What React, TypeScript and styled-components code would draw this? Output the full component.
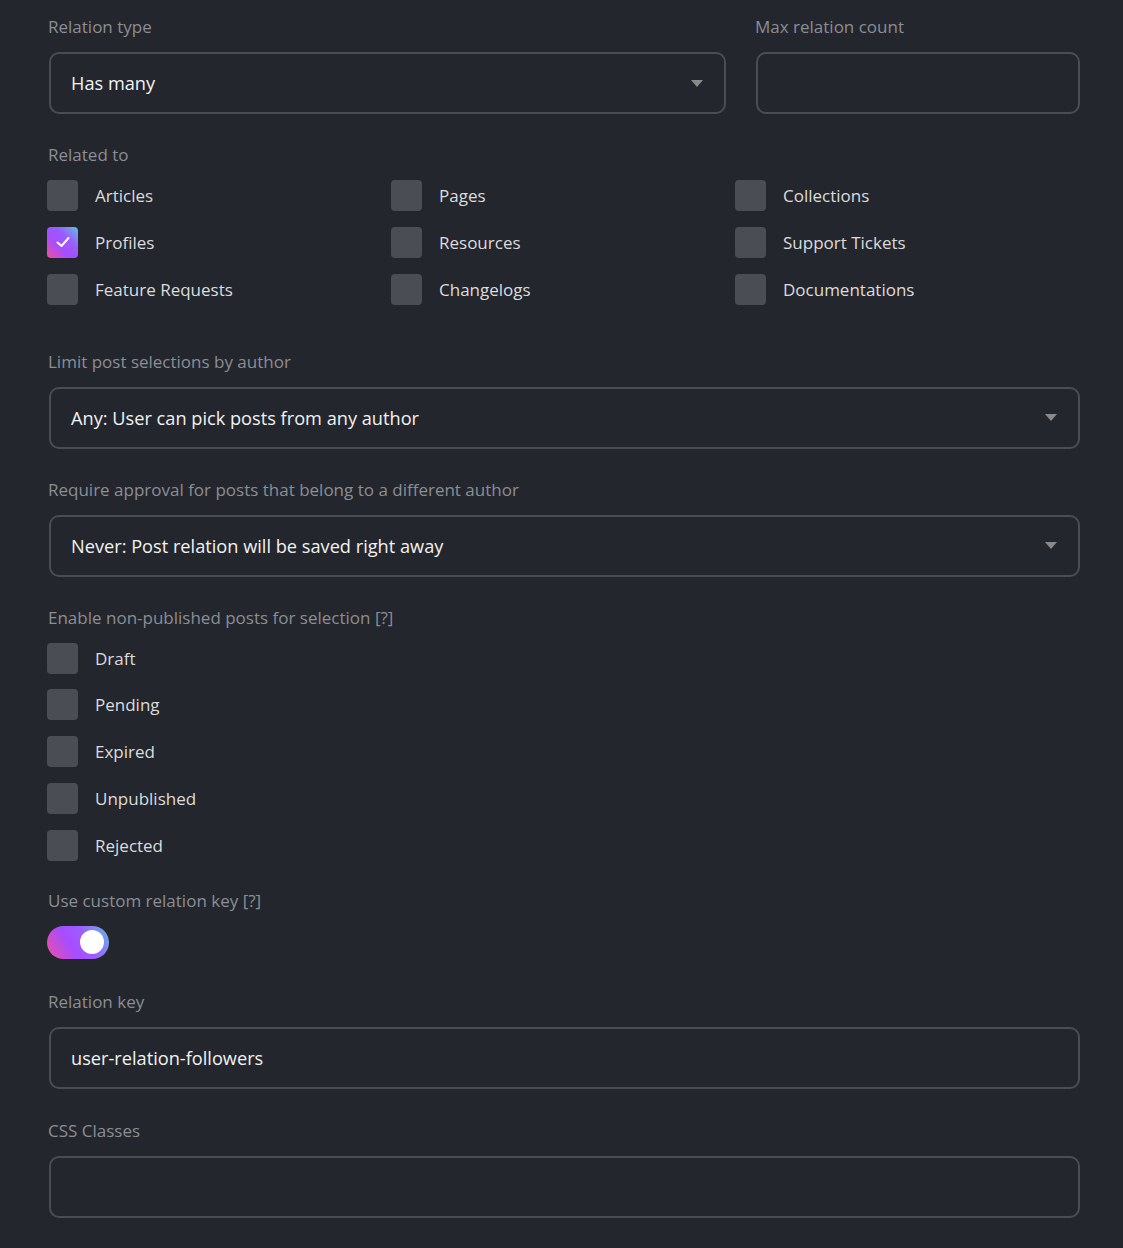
import React from "react";
import styled, { createGlobalStyle } from "styled-components";

const Global = createGlobalStyle`
  html, body { margin: 0; padding: 0; background: #23262d; }
  body { font-family: "Open Sans", "Noto Sans", sans-serif; }
  * { box-sizing: border-box; }
`;

const Page = styled.div`
  background: #23262d;
  min-height: 1248px;
  padding: 15px 43px 30px 48px;
  display: flex;
  flex-direction: column;
`;

const Row = styled.div`
  display: grid;
  grid-template-columns: 678px 1fr;
  column-gap: 29px;
`;

const Field = styled.div<{ $mb?: number }>`
  display: flex;
  flex-direction: column;
  margin-bottom: ${(p) => (p.$mb ?? 29)}px;
`;

const Label = styled.div`
  font-size: 17px;
  line-height: 24px;
  height: 24px;
  color: #8b8e94;
  margin-bottom: 13px;
  white-space: nowrap;
`;

const Box = styled.div`
  height: 62px;
  border: 2px solid #4a4d53;
  border-radius: 10px;
  margin-left: 1px;
  display: flex;
  align-items: center;
  padding: 0 21px 0 20px;
  color: #f2f2f2;
  font-size: 18.2px;
`;

const Value = styled.span`
  flex: 1;
`;

const Caret = styled.span`
  width: 0;
  height: 0;
  border-left: 6px solid transparent;
  border-right: 6px solid transparent;
  border-top: 7px solid #8a8a8a;
`;

const CheckGrid = styled.div<{ $cols: number }>`
  display: grid;
  grid-template-columns: repeat(${(p) => p.$cols}, 344px);
  row-gap: 15.75px;
`;

const CheckItem = styled.label`
  display: flex;
  align-items: center;
  gap: 17px;
  height: 31px;
  color: #dcdcdc;
  font-size: 17px;
  white-space: nowrap;
`;

const CheckBox = styled.span<{ $on?: boolean }>`
  width: 31px;
  height: 31px;
  border-radius: 4px;
  margin-left: -1px;
  background: ${(p) =>
    p.$on
      ? "linear-gradient(45deg, #f24f9a 0%, #a64dff 38%, #9b5cff 65%, #5ec3e0 100%)"
      : "#4a4d54"};
  display: flex;
  align-items: center;
  justify-content: center;
  flex-shrink: 0;
`;

const Toggle = styled.div`
  width: 62px;
  height: 33px;
  border-radius: 17px;
  margin-left: -1px;
  background: linear-gradient(60deg, #f04fa0 0%, #a64dff 38%, #9e5cff 62%, #63b8e3 100%);
  display: flex;
  align-items: center;
  justify-content: flex-end;
  padding-right: 5px;
`;

const Knob = styled.span`
  width: 24px;
  height: 24px;
  border-radius: 50%;
  background: #ffffff;
`;

const Check = () => (
  <svg width="16" height="16" viewBox="0 0 16 16">
    <path d="M2.5 8.5 L6.5 12 L13.5 4" fill="none" stroke="#fff" strokeWidth="2" strokeLinecap="round" strokeLinejoin="round" />
  </svg>
);

const related = [
  ["Articles", false],
  ["Pages", false],
  ["Collections", false],
  ["Profiles", true],
  ["Resources", false],
  ["Support Tickets", false],
  ["Feature Requests", false],
  ["Changelogs", false],
  ["Documentations", false],
] as const;

const statuses = ["Draft", "Pending", "Expired", "Unpublished", "Rejected"];

export default function App() {
  return (
    <>
      <Global />
      <Page>
        <Row>
          <Field>
            <Label>Relation type</Label>
            <Box>
              <Value>Has many</Value>
              <Caret />
            </Box>
          </Field>
          <Field>
            <Label>Max relation count</Label>
            <Box />
          </Field>
        </Row>

        <Field $mb={45}>
          <Label>Related to</Label>
          <CheckGrid $cols={3}>
            {related.map(([name, on]) => (
              <CheckItem key={name}>
                <CheckBox $on={on}>{on && <Check />}</CheckBox>
                {name}
              </CheckItem>
            ))}
          </CheckGrid>
        </Field>

        <Field>
          <Label>Limit post selections by author</Label>
          <Box>
            <Value>Any: User can pick posts from any author</Value>
            <Caret />
          </Box>
        </Field>

        <Field>
          <Label>Require approval for posts that belong to a different author</Label>
          <Box>
            <Value>Never: Post relation will be saved right away</Value>
            <Caret />
          </Box>
        </Field>

        <Field $mb={28}>
          <Label>Enable non-published posts for selection [?]</Label>
          <CheckGrid $cols={1}>
            {statuses.map((s) => (
              <CheckItem key={s}>
                <CheckBox />
                {s}
              </CheckItem>
            ))}
          </CheckGrid>
        </Field>

        <Field $mb={31}>
          <Label>Use custom relation key [?]</Label>
          <Toggle>
            <Knob />
          </Toggle>
        </Field>

        <Field $mb={30}>
          <Label>Relation key</Label>
          <Box>
            <Value>user-relation-followers</Value>
          </Box>
        </Field>

        <Field>
          <Label>CSS Classes</Label>
          <Box />
        </Field>
      </Page>
    </>
  );
}
